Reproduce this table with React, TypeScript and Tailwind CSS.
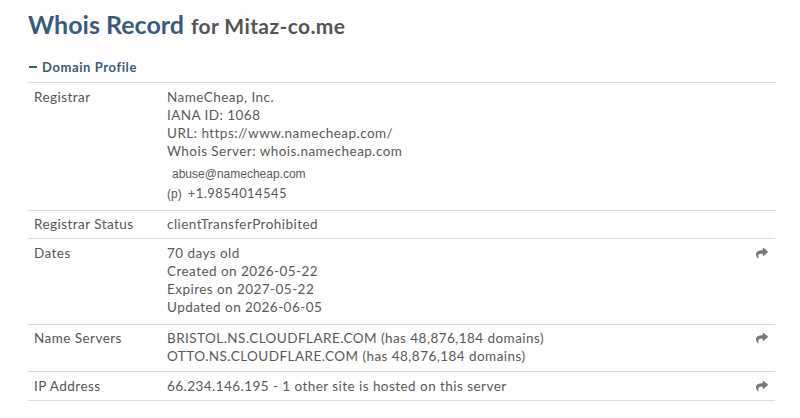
import { FaShare } from 'react-icons/fa';

type Row = {
    label: string;
    lines: string[];
    extra?: boolean;
    link?: boolean;
    pad: string;
};

const rows: Row[] = [
    {
        label: 'Registrar',
        lines: ['NameCheap, Inc.', 'IANA ID: 1068', 'URL: https://www.namecheap.com/', 'Whois Server: whois.namecheap.com'],
        extra: true,
        pad: 'pt-[5px] pb-[6px]',
    },
    { label: 'Registrar Status', lines: ['clientTransferProhibited'], pad: 'pt-[4px] pb-[5px]' },
    {
        label: 'Dates',
        lines: ['70 days old', 'Created on 2026-05-22', 'Expires on 2027-05-22', 'Updated on 2026-06-05'],
        link: true,
        pad: 'pt-[5px] pb-[8px]',
    },
    {
        label: 'Name Servers',
        lines: ['BRISTOL.NS.CLOUDFLARE.COM (has 48,876,184 domains)', 'OTTO.NS.CLOUDFLARE.COM (has 48,876,184 domains)'],
        link: true,
        pad: 'pt-[4px] pb-[6px]',
    },
    { label: 'IP Address', lines: ['66.234.146.195 - 1 other site is hosted on this server'], link: true, pad: 'pt-[5px] pb-[5px]' },
];

export default function App() {
    return (
        <div className="min-h-screen bg-white font-['Lato','Open_Sans',sans-serif] text-[#5a5a5a] pl-[28px] pr-[25px] pt-[8px]">
            <h1 className="flex items-baseline gap-[7px] leading-[32px]">
                <span className="text-[25px] font-bold text-[#3a5a80]">Whois Record</span>
                <span className="text-[21px] font-bold tracking-[0.4px] text-[#555]">for Mitaz-co.me</span>
            </h1>
            <div className="mt-[16px] flex items-center gap-[5px] pl-[1px] pb-[6px] text-[13px] font-bold tracking-[0.6px] text-[#3a5a80] leading-[18px]">
                <span className="block w-[8px] h-[2px] bg-[#3a5a80]"></span>
                <span>Domain Profile</span>
            </div>
            <div className="border-t border-[#dcdcdc]">
                {rows.map((r) => (
                    <div key={r.label} className={`flex border-b border-[#dcdcdc] ${r.pad} text-[13.5px] leading-[18px] tracking-[0.45px]`}>
                        <div className="w-[139px] pl-[6px] shrink-0 text-[#555]">{r.label}</div>
                        <div className="flex-1">
                            {r.lines.map((l) => (
                                <div key={l}>{l}</div>
                            ))}
                            {r.extra && (
                                <div className="mt-[5px]">
                                    <div className="pl-[5px] leading-[19px] font-['Liberation_Sans',Arial,sans-serif] text-[12px] tracking-normal">
                                        abuse@namecheap.com
                                    </div>
                                    <div className="leading-[19px] flex items-baseline">
                                        <span className="font-['Liberation_Sans',Arial,sans-serif] text-[12px] tracking-normal">(p)</span>
                                        <span className="ml-[6px] text-[13px]">+1.9854014545</span>
                                    </div>
                                </div>
                            )}
                        </div>
                        {r.link && (
                            <div className="w-[20px] pt-[3px] flex justify-end pr-[7px] text-[#777]">
                                <FaShare size={12} />
                            </div>
                        )}
                    </div>
                ))}
            </div>
        </div>
    );
}
